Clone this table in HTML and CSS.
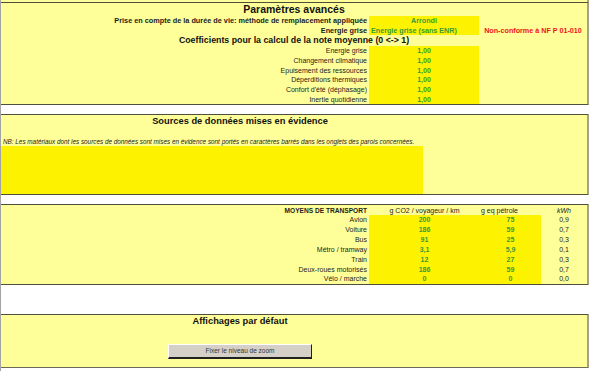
FILE: index.html
```
<!DOCTYPE html>
<html lang="fr">
<head>
<meta charset="utf-8">
<title>Paramètres avancés</title>
<link rel="stylesheet" href="styles.css">
</head>
<body>
<div class="sheet">
  <div class="strip"></div>

  <section class="sec sec-params">
    <div class="title-full">Paramètres avancés</div>
    <div class="grid-params rows-top">
      <div class="lbl b75">Prise en compte de la durée de vie: méthode de remplacement appliquée</div>
      <div class="val val-c">Arrondi</div>
      <div class="rest"></div>
      <div class="lbl b75">Energie grise</div>
      <div class="val val-l">Energie grise (sans ENR)</div>
      <div class="rest warn">Non-conforme à NF P 01-010</div>
    </div>
    <div class="subtitle">Coefficients pour la calcul de la note moyenne (0 &lt;-&gt; 1)</div>
    <div class="grid-params rows-coef">
      <div class="lbl">Energie grise</div><div class="val val-c num">1,00</div><div class="rest"></div>
      <div class="lbl">Changement climatique</div><div class="val val-c num">1,00</div><div class="rest"></div>
      <div class="lbl">Epuisement des ressources</div><div class="val val-c num">1,00</div><div class="rest"></div>
      <div class="lbl">Déperditions thermiques</div><div class="val val-c num">1,00</div><div class="rest"></div>
      <div class="lbl">Confort d'été (déphasage)</div><div class="val val-c num">1,00</div><div class="rest"></div>
      <div class="lbl">Inertie quotidienne</div><div class="val val-c num">1,00</div><div class="rest"></div>
    </div>
  </section>

  <section class="sec sec-sources">
    <div class="title-part">Sources de données mises en évidence</div>
    <div class="nb">NB: Les matériaux dont les sources de données sont mises en évidence sont portés en caractères barrés dans les onglets des parois concernées.</div>
    <div class="src-box"></div>
  </section>

  <section class="sec sec-transport">
    <div class="grid-transport">
      <div class="lbl hb">MOYENS DE TRANSPORT</div>
      <div class="th th-c">g CO2 / voyageur / km</div>
      <div class="th th-l">g eq pétrole</div>
      <div class="th th-c it">kWh</div>

      <div class="lbl">Avion</div><div class="val val-c num">200</div><div class="val val-c num">75</div><div class="kwh">0,9</div>
      <div class="lbl">Voiture</div><div class="val val-c num">186</div><div class="val val-c num">59</div><div class="kwh">0,7</div>
      <div class="lbl">Bus</div><div class="val val-c num">91</div><div class="val val-c num">25</div><div class="kwh">0,3</div>
      <div class="lbl">Métro / tramway</div><div class="val val-c num">3,1</div><div class="val val-c num">5,9</div><div class="kwh">0,1</div>
      <div class="lbl">Train</div><div class="val val-c num">12</div><div class="val val-c num">27</div><div class="kwh">0,3</div>
      <div class="lbl">Deux-roues motorisés</div><div class="val val-c num">186</div><div class="val val-c num">59</div><div class="kwh">0,7</div>
      <div class="lbl">Vélo / marche</div><div class="val val-c num">0</div><div class="val val-c num">0</div><div class="kwh">0,0</div>
    </div>
  </section>

  <section class="sec sec-display">
    <div class="title-part">Affichages par défaut</div>
    <div class="btn-row">
      <button class="btn" type="button">Fixer le niveau de zoom</button>
    </div>
  </section>
</div>
</body>
</html>
```

FILE: styles.css
```
* {
  box-sizing: border-box;
  margin: 0;
  padding: 0;
}

html, body {
  background: #ffffff;
}

body {
  margin: 0;
  font-family: "Liberation Sans", Arial, sans-serif;
  color: #1c1c1c;
}

.sheet {
  width: 589px;
  min-height: 371px;
  border-left: 1px solid #a4a4a4;
}

.strip {
  height: 2px;
  background: #ffff99;
  border-right: 2px solid #a5a28c;
}

.sec {
  background: #ffff99;
  border-top: 1px solid #4f4f3c;
  border-bottom: 1px solid #4f4f3c;
  border-right: 2px solid #a5a28c;
}

.sec-params {
  height: 103px;
}

.sec-sources {
  height: 81px;
  margin-top: 9px;
}

.sec-transport {
  height: 81px;
  margin-top: 9px;
}

.sec-display {
  height: 54px;
  margin-top: 29px;
  border-bottom: 1px solid #6a6a5a;
}

/* titles */
.title-full {
  height: 13px;
  line-height: 13px;
  text-align: center;
  font-size: 10.5px;
  font-weight: bold;
  color: #111;
}

.title-part {
  width: 478px;
  height: 13px;
  line-height: 13px;
  text-align: center;
  font-size: 9.3px;
  font-weight: bold;
  color: #111;
}

.subtitle {
  height: 11px;
  line-height: 11px;
  text-align: center;
  font-size: 8.8px;
  font-weight: bold;
  color: #111;
}

/* section 1 grid */
.grid-params {
  display: grid;
  grid-template-columns: 368px 110px 1fr;
}

.rows-top {
  grid-auto-rows: 9.5px;
}

.rows-coef {
  grid-auto-rows: 9.667px;
}

.lbl {
  text-align: right;
  padding-right: 2px;
  font-size: 7px;
  white-space: nowrap;
  display: flex;
  align-items: center;
  justify-content: flex-end;
}

.b75 {
  font-size: 7.3px;
  font-weight: bold;
}

.hb {
  font-size: 6.6px;
  font-weight: bold;
}

.val {
  background: #fdf300;
  font-size: 7.2px;
  font-weight: bold;
  color: #3a9a3a;
  white-space: nowrap;
  display: flex;
  align-items: center;
}

.val-c {
  justify-content: center;
}

.val-l {
  justify-content: flex-start;
  padding-left: 2px;
}

.num {
  font-size: 7px;
}

.rest {
  display: flex;
  align-items: center;
  justify-content: center;
}

.warn {
  font-size: 7.2px;
  font-weight: bold;
  color: #f01414;
  white-space: nowrap;
}

/* section 2 */
.nb {
  height: 18px;
  display: flex;
  align-items: flex-end;
  padding: 0 0 1px 2px;
  font-size: 6.35px;
  font-style: italic;
  white-space: nowrap;
  color: #1c1c1c;
}

.src-box {
  width: 422px;
  height: 48px;
  background: #fdf300;
}

/* section 3 */
.grid-transport {
  display: grid;
  grid-template-columns: 368px 111px 61px 1fr;
  grid-template-rows: 10px repeat(7, 9.857px);
}

.th {
  font-size: 7px;
  white-space: nowrap;
  display: flex;
  align-items: center;
}

.th-c {
  justify-content: center;
}

.th-l {
  justify-content: flex-start;
  padding-left: 1px;
}

.it {
  font-style: italic;
}

.kwh {
  font-size: 7px;
  display: flex;
  align-items: center;
  justify-content: center;
}

/* section 4 */
.btn-row {
  width: 478px;
  display: flex;
  justify-content: center;
  padding-top: 16px;
}

.btn {
  width: 144px;
  height: 15px;
  background: #d4d0c8;
  border-top: 1px solid #ffffff;
  border-left: 1px solid #ffffff;
  border-right: 1px solid #202020;
  border-bottom: 2px solid #202020;
  font-family: "Liberation Sans", Arial, sans-serif;
  font-size: 6.5px;
  color: #333;
  line-height: 12px;
  padding: 0;
}
```
